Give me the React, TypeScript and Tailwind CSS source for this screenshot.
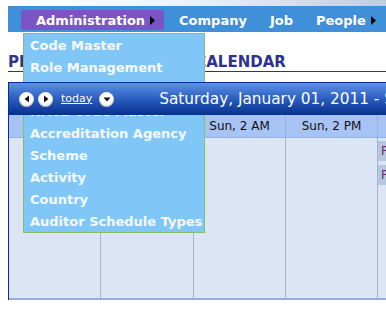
const menuItems = [
  'Code Master',
  'Role Management',
  'Auditor Master',
  'NACE Code Master',
  'Accreditation Agency',
  'Scheme',
  'Activity',
  'Country',
  'Auditor Schedule Types',
];

function RightArrow() {
  return (
    <svg width="5" height="9" viewBox="0 0 5 9" className="block">
      <path d="M0 0 L5 4.5 L0 9 Z" fill="#000" />
    </svg>
  );
}

function CircleButton({ dir }: { dir: 'left' | 'right' | 'down' }) {
  const d =
    dir === 'left' ? 'M9 3.5 L4.5 7 L9 10.5 Z' : dir === 'right' ? 'M5 3.5 L9.5 7 L5 10.5 Z' : 'M3.5 5.5 L10.5 5.5 L7 9.5 Z';
  return (
    <div className="w-[15px] h-[15px] rounded-full bg-white shadow-[inset_0_-1px_2px_rgba(0,0,0,0.35)] flex items-center justify-center">
      <svg width="14" height="14" viewBox="0 0 14 14" className="block">
        <path d={d} fill="#111" />
      </svg>
    </div>
  );
}

export default function App() {
  return (
    <div
      className="relative w-[386px] h-[309px] bg-white overflow-hidden"
      style={{ fontFamily: '"DejaVu Sans", Verdana, sans-serif' }}
    >
      <div className="h-[6px] bg-gradient-to-r from-white via-[#eef2f8] to-[#bccde8]" />

      {/* top navigation */}
      <div className="ml-[8px] h-[26px] bg-[#3f8fd9] flex items-end pb-[2px] text-[13px] font-bold text-white">
        <div className="relative ml-[13px] h-[20px] bg-[#7b55c3] flex items-center pt-[1px] pl-[15px] pr-[9px]">
          <span>Administration</span>
          <span className="ml-[5px]">
            <RightArrow />
          </span>

          <div className="absolute z-10 left-[2px] top-[23px] w-[182px] bg-[#80c7f8] border border-[#86bf6c]">
            {menuItems.map((item) => (
              <div key={item} className="h-[22px] flex items-center pt-[2px] pl-[6px] text-[13px] font-bold text-[#f4faff] whitespace-nowrap">
                {item}
              </div>
            ))}
          </div>
        </div>
        <div className="h-[20px] flex items-center pt-[1px]">
          <span className="ml-[15px]">Company</span>
          <span className="ml-[23px]">Job</span>
          <span className="ml-[23px]">People</span>
          <span className="ml-[5px]">
            <RightArrow />
          </span>
        </div>
      </div>

      {/* title */}
      <div className="ml-[8px] h-[40px] border-b border-[#2e3192] pt-[21px]">
        <div className="text-[15px] leading-[19px] font-bold text-[#2e3192] whitespace-nowrap">
          PLANNING SCHEDULE CALENDAR
        </div>
      </div>

      {/* calendar */}
      <div className="ml-[8px] mt-[10px] w-[500px] border-l border-[#0b2c98]">
        <div className="relative z-20 h-[33px] border-t border-[#0b2c98] bg-gradient-to-b from-[#5d91e3] via-[#2a5dc0] to-[#07308f] flex items-center text-white">
          <div className="ml-[10px]">
            <CircleButton dir="left" />
          </div>
          <div className="ml-[4px]">
            <CircleButton dir="right" />
          </div>
          <span className="ml-[8px] text-[11px] underline">today</span>
          <div className="ml-[7px]">
            <CircleButton dir="down" />
          </div>
          <span className="ml-[45px] text-[15.3px] whitespace-nowrap">Saturday, January 01, 2011 - Sunday, January 02, 2011</span>
        </div>

        <div className="flex h-[23px] bg-[#a7c3f3] border-b border-[#92b2e6] text-[12px] text-[#111]">
          <div className="w-[92px] border-r border-[#92b2e6] flex items-center justify-center">Sat, 2 AM</div>
          <div className="w-[93px] border-r border-[#92b2e6] flex items-center justify-center">Sat, 2 PM</div>
          <div className="w-[92px] border-r border-[#92b2e6] flex items-center justify-center">Sun, 2 AM</div>
          <div className="w-[92px] border-r border-[#92b2e6] flex items-center justify-center">Sun, 2 PM</div>
          <div className="flex-1 flex items-center justify-center">Mon, 2 AM</div>
        </div>

        <div className="flex h-[162px] bg-[#dce5f4] border-b-2 border-[#98aed8]">
          <div className="w-[92px] border-r border-[#a1b4d2]" />
          <div className="w-[93px] border-r border-[#a1b4d2]" />
          <div className="w-[92px] border-r border-[#a1b4d2]" />
          <div className="w-[92px] border-r border-[#a1b4d2]" />
          <div className="flex-1 flex flex-col gap-[4px] pt-[3px] text-[12px] text-[#6b2466]">
            <div className="h-[20px] bg-[#b5c6df] pl-[3px] flex items-center whitespace-nowrap">Planned Audit</div>
            <div className="h-[20px] bg-[#b5c6df] pl-[3px] flex items-center whitespace-nowrap">Planned Audit</div>
          </div>
        </div>
      </div>
    </div>
  );
}
